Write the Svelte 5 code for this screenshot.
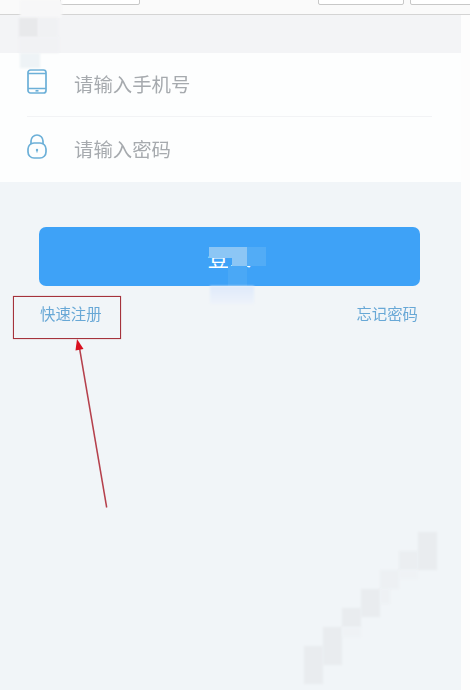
<script lang="ts">
    // mosaic blocks: x, y, w, h, colour
    const blocks = [
        [20, 0, 42, 18, '#f7f7f8'],
        [19, 18, 19, 19, '#e8e9eb'],
        [38, 18, 20, 19, '#f0f1f3'],
        [19, 37, 40, 16, '#f1f2f4'],
        [20, 53, 20, 15, '#eef3f6'],
        [418, 532, 19, 38, '#e9ecef'],
        [399, 551, 19, 19, '#ebeef1'],
        [380, 570, 19, 19, '#edf0f3'],
        [399, 570, 19, 9, '#eff2f5'],
        [361, 589, 19, 28, '#e9ecef'],
        [380, 589, 10, 15, '#eef1f4'],
        [342, 608, 19, 19, '#e9ecef'],
        [323, 627, 19, 38, '#e9ecef'],
        [304, 646, 19, 38, '#e9ecef'],
        [342, 627, 19, 10, '#eff2f5']
    ];
</script>

<main class="page">
    <div class="toolbar">
        <span class="tool-btn first"></span>
        <span class="tool-btn second"></span>
        <span class="tool-btn third"></span>
    </div>
    <div class="shot">
        <div class="band"></div>
        <section class="form">
            <div class="row">
                <svg class="icon" width="20" height="25" viewBox="0 0 20 25" fill="none" stroke="#6cb0d8" stroke-width="1.7">
                    <rect x="1" y="1" width="18" height="23" rx="2.5" />
                    <path d="M1 4.500h18M1 19.500h18" />
                    <path d="M8.500 21.800h3" />
                </svg>
                <span class="placeholder">请输入手机号</span>
            </div>
            <div class="row">
                <svg class="icon" width="20" height="25" viewBox="0 0 20 25" fill="none" stroke="#6cb0d8" stroke-width="1.7">
                    <path d="M4 10V7a6 6 0 0 1 12 0v3" />
                    <rect x="1" y="9" width="18" height="15" rx="6" />
                    <circle cx="10" cy="16" r="1.200" fill="#6cb0d8" stroke="none" />
                    <path d="M10 16v2.400" stroke-width="1.100" />
                </svg>
                <span class="placeholder">请输入密码</span>
            </div>
        </section>
        <button class="login">登录</button>
        <div class="links">
            <span class="link">快速注册</span>
            <span class="link">忘记密码</span>
        </div>
    </div>

    <!-- mosaic over the screenshot -->
    {#each blocks as [x, y, w, h, c]}
        <div class="block" style="left:{x}px;top:{y}px;width:{w}px;height:{h}px;background:{c}"></div>
    {/each}
    <div class="smear top"></div>
    <div class="smear side"></div>
    <div class="smear mid"></div>
    <div class="smear column"></div>
    <div class="smear under"></div>

    <!-- red annotation -->
    <div class="mark"></div>
    <svg class="arrow" width="60" height="185" viewBox="60 330 60 185" fill="none">
        <path d="M106.700 507.500L79.500 348" stroke="#b5404c" stroke-width="1.500" />
        <path d="M77 339L75.500 350.500L83.500 349Z" fill="#d8101f" />
    </svg>
</main>

<style>
    :global(body) {
        margin: 0;
        background: #fdfdfd;
    }

    .page {
        position: relative;
        width: 470px;
        height: 690px;
        overflow: hidden;
        font-family: "Noto Sans CJK SC", "Liberation Sans", sans-serif;
    }

    .toolbar {
        position: relative;
        height: 14px;
        background: #fafafa;
        border-bottom: 1px solid #d4d4d4;
    }

    .tool-btn {
        position: absolute;
        top: -4px;
        height: 7px;
        background: #fff;
        border: 1px solid #c8c8c8;
        border-radius: 2px;
    }
    .first { left: 60px; width: 78px; }
    .second { left: 318px; width: 84px; }
    .third { left: 410px; width: 70px; }

    .shot {
        width: 461px;
        height: 675px;
        background: #f1f5f8;
        display: flex;
        flex-direction: column;
    }

    .band {
        height: 38px;
        background: #f3f4f6;
    }

    .form {
        height: 129px;
        background: #fdfefe;
    }

    .row {
        box-sizing: border-box;
        height: 64px;
        padding-bottom: 2px;
        margin-left: 27px;
        margin-right: 29px;
        display: flex;
        align-items: center;
        gap: 27px;
    }
    .row:first-child {
        border-bottom: 1px solid #f2f3f5;
    }
    .row:last-child {
        height: 65px;
    }

    .icon {
        flex-shrink: 0;
        margin-bottom: 4px;
        filter: blur(0.3px);
    }

    .placeholder {
        font-size: 19.4px;
        color: #a6aaae;
        filter: blur(0.5px);
    }

    .login {
        display: block;
        margin: 45px 0 0 39px;
        width: 381px;
        height: 59px;
        border: none;
        border-radius: 7px;
        background: #3ea2f7;
        color: #fff;
        font-family: inherit;
        font-size: 22px;
        line-height: 59px;
        padding: 0;
    }

    .links {
        display: flex;
        justify-content: space-between;
        margin: 16px 43px 0 40px;
    }

    .link {
        font-size: 15.400px;
        line-height: 22px;
        color: #68a8d6;
        filter: blur(0.5px);
    }

    .block {
        position: absolute;
        filter: blur(0.8px);
    }

    .smear {
        position: absolute;
    }
    .smear.top {
        left: 209px;
        top: 247px;
        width: 38px;
        height: 11px;
        background: #8cc6f5;
    }
    .smear.side {
        left: 232px;
        top: 258px;
        width: 15px;
        height: 8px;
        background: #8cc6f5;
    }
    .smear.mid {
        left: 247px;
        top: 247px;
        width: 19px;
        height: 19px;
        background: #52acf6;
    }
    .smear.column {
        left: 228px;
        top: 266px;
        width: 19px;
        height: 20px;
        background: #4aa8f6;
    }
    .smear.under {
        left: 210px;
        top: 286px;
        width: 44px;
        height: 18px;
        background: linear-gradient(#dfeafa, #eef3fa);
        filter: blur(1px);
    }

    .mark {
        position: absolute;
        left: 13px;
        top: 296px;
        width: 106px;
        height: 41px;
        border: 1px solid #a5323c;
        box-shadow: 0 0 1px rgba(176, 60, 70, 0.6);
    }

    .arrow {
        position: absolute;
        left: 60px;
        top: 330px;
    }
</style>
